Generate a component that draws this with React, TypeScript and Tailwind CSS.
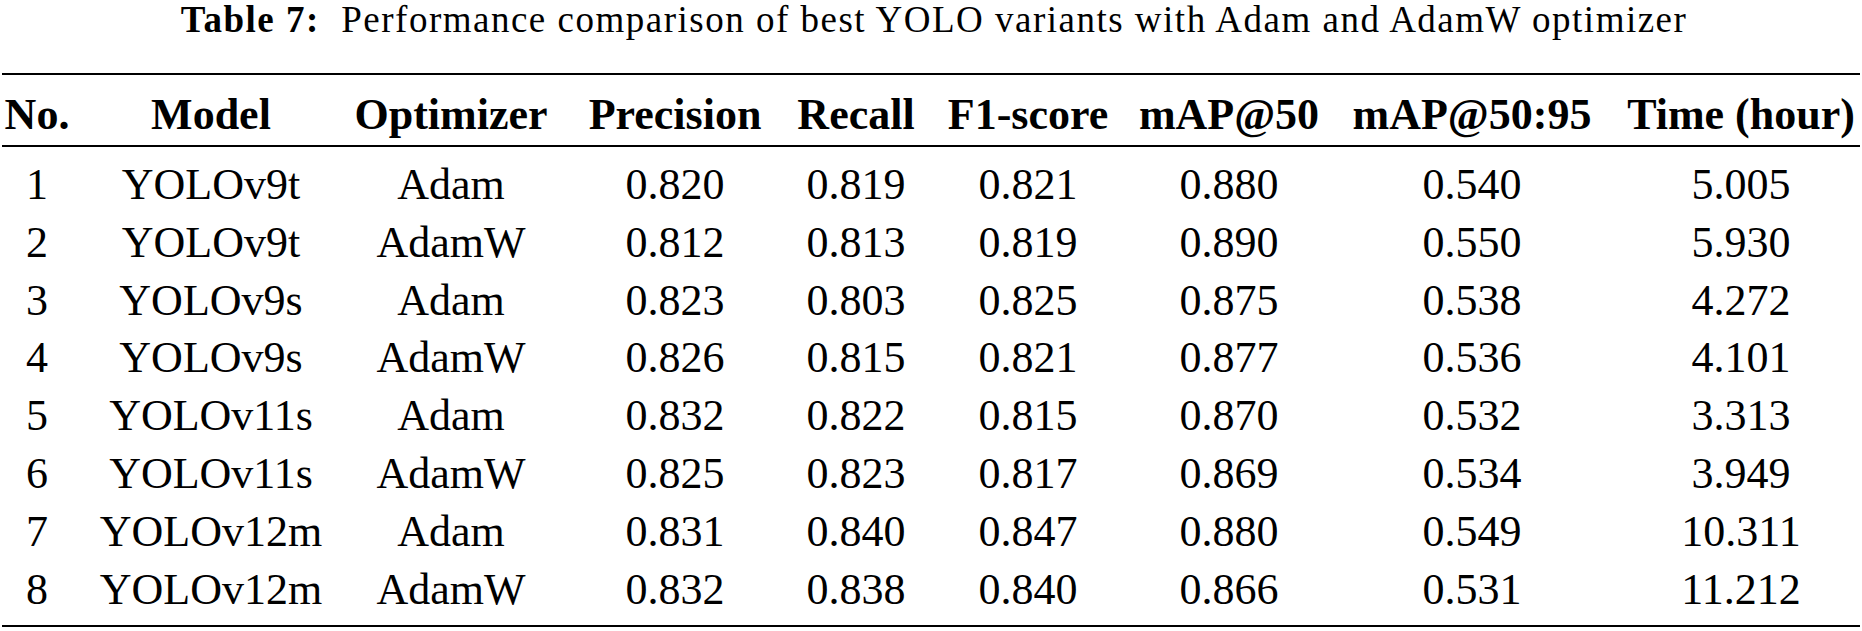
import React from 'react';

type Row = {
    no: number;
    model: string;
    optimizer: string;
    precision: string;
    recall: string;
    f1: string;
    map50: string;
    map5095: string;
    time: string;
};

const rows: Row[] = [
    { no: 1, model: 'YOLOv9t', optimizer: 'Adam', precision: '0.820', recall: '0.819', f1: '0.821', map50: '0.880', map5095: '0.540', time: '5.005' },
    { no: 2, model: 'YOLOv9t', optimizer: 'AdamW', precision: '0.812', recall: '0.813', f1: '0.819', map50: '0.890', map5095: '0.550', time: '5.930' },
    { no: 3, model: 'YOLOv9s', optimizer: 'Adam', precision: '0.823', recall: '0.803', f1: '0.825', map50: '0.875', map5095: '0.538', time: '4.272' },
    { no: 4, model: 'YOLOv9s', optimizer: 'AdamW', precision: '0.826', recall: '0.815', f1: '0.821', map50: '0.877', map5095: '0.536', time: '4.101' },
    { no: 5, model: 'YOLOv11s', optimizer: 'Adam', precision: '0.832', recall: '0.822', f1: '0.815', map50: '0.870', map5095: '0.532', time: '3.313' },
    { no: 6, model: 'YOLOv11s', optimizer: 'AdamW', precision: '0.825', recall: '0.823', f1: '0.817', map50: '0.869', map5095: '0.534', time: '3.949' },
    { no: 7, model: 'YOLOv12m', optimizer: 'Adam', precision: '0.831', recall: '0.840', f1: '0.847', map50: '0.880', map5095: '0.549', time: '10.311' },
    { no: 8, model: 'YOLOv12m', optimizer: 'AdamW', precision: '0.832', recall: '0.838', f1: '0.840', map50: '0.866', map5095: '0.531', time: '11.212' },
];

const headers = ['No.', 'Model', 'Optimizer', 'Precision', 'Recall', 'F1-score', 'mAP@50', 'mAP@50:95', 'Time (hour)'];

// column widths picked so every column centre lines up with the paper's layout
const GRID = 'grid grid-cols-[70px_278px_202px_246px_116px_228px_174px_312px_226px_1fr]';

const Cell: React.FC<{ children: React.ReactNode }> = ({ children }) => (
    <div className="flex justify-center whitespace-nowrap">{children}</div>
);

export default function App() {
    return (
        <div className="w-[1862px] h-[631px] bg-white text-black font-['Liberation_Serif',serif] overflow-hidden">
            <p className="text-center text-[37px] leading-[40px] tracking-[1.5px] pl-[6px]">
                <span className="font-bold">Table 7:</span>&nbsp; Performance comparison of best YOLO variants with Adam and AdamW optimizer
            </p>

            <div className="mx-[2px] mt-[33px] border-t-2 border-b-2 border-black">
                <div className={`${GRID} border-b-2 border-black h-[72px] pt-[16px] text-[44px] leading-[48px] font-bold`}>
                    {headers.map(h => (
                        <Cell key={h}>{h}</Cell>
                    ))}
                    <div />
                </div>

                <div className="pt-[9px] pb-[7px] text-[44px] leading-[57.8px]">
                    {rows.map(r => (
                        <div key={r.no} className={GRID}>
                            <Cell>{r.no}</Cell>
                            <Cell>{r.model}</Cell>
                            <Cell>{r.optimizer}</Cell>
                            <Cell>{r.precision}</Cell>
                            <Cell>{r.recall}</Cell>
                            <Cell>{r.f1}</Cell>
                            <Cell>{r.map50}</Cell>
                            <Cell>{r.map5095}</Cell>
                            <Cell>{r.time}</Cell>
                            <div />
                        </div>
                    ))}
                </div>
            </div>
        </div>
    );
}
